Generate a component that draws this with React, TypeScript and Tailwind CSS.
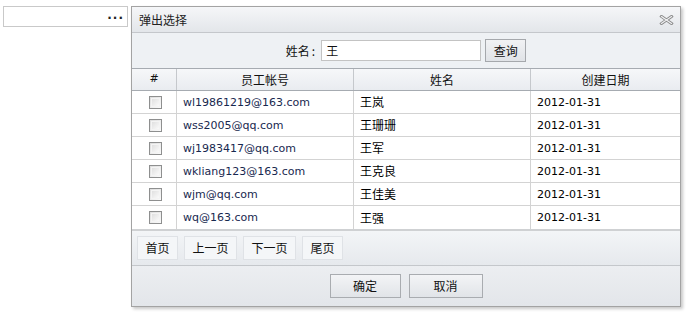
import React from 'react';

const rows = [
  { account: 'wl19861219@163.com', name: '王岚', date: '2012-01-31' },
  { account: 'wss2005@qq.com', name: '王珊珊', date: '2012-01-31' },
  { account: 'wj1983417@qq.com', name: '王军', date: '2012-01-31' },
  { account: 'wkliang123@163.com', name: '王克良', date: '2012-01-31' },
  { account: 'wjm@qq.com', name: '王佳美', date: '2012-01-31' },
  { account: 'wq@163.com', name: '王强', date: '2012-01-31' },
];

const cjk = "font-['Noto_Sans_CJK_SC',sans-serif] text-[12px]";
const latin = "font-['DejaVu_Sans','Noto_Sans_CJK_SC',sans-serif] text-[11px]";

function CloseIcon() {
  return (
    <svg width="15" height="10" viewBox="0 0 15 10">
      <path d="M2.5 1.5 L12.5 8.5 M12.5 1.5 L2.5 8.5" stroke="#8a8a8a" strokeWidth="3" strokeLinecap="square" />
      <path d="M2.5 1.5 L12.5 8.5 M12.5 1.5 L2.5 8.5" stroke="#f0f1f3" strokeWidth="1.2" strokeLinecap="square" />
    </svg>
  );
}

function Checkbox() {
  return (
    <span className="block w-[13px] h-[13px] border border-[#8e8f8f] bg-gradient-to-br from-[#dcdcdc] to-[#fbfbfb] p-[1px]">
      <span className="block w-full h-full border border-[#f4f4f4] bg-gradient-to-br from-[#e0e0e0] to-[#fafafa]" />
    </span>
  );
}

function PagerButton({ label, width }: { label: string; width: string }) {
  return (
    <button className={`${width} h-[24px] border border-[#dfe2e6] bg-[#f4f6f8] text-[#111] leading-none ${cjk}`}>
      {label}
    </button>
  );
}

export default function App() {
  return (
    <div className="w-[690px] h-[314px] bg-white flex items-start overflow-hidden">
      {/* trigger input */}
      <div className="ml-[3px] mt-[6px] w-[125px] h-[21px] border border-[#c9c9c9] bg-white flex items-center justify-end pr-[3px]">
        <span className="text-[#222] font-bold text-[12px] leading-none tracking-[1px] font-['DejaVu_Sans',sans-serif] -mt-[4px]">...</span>
      </div>

      {/* dialog */}
      <div className="ml-[3px] mt-[6px] w-[550px] h-[301px] border border-[#a3a3a3] bg-[#e9ecf0] flex flex-col shadow-[2px_2px_3px_rgba(0,0,0,0.22)]">
        <div className="h-[26px] shrink-0 flex items-center justify-between pl-[7px] pr-[6px] bg-gradient-to-b from-[#f5f6f8] to-[#e3e6ea] border-b border-[#c4c7cb]">
          <span className={`text-[#222] ${cjk}`}>弹出选择</span>
          <CloseIcon />
        </div>

        <div className="h-[35px] shrink-0 flex items-center justify-center bg-[#eef1f4]">
          <span className={`text-[#111] mr-[6px] ${cjk}`}>
            姓名<span className="ml-[2px]">:</span>
          </span>
          <div className={`w-[160px] h-[21px] border border-[#c3c3c3] bg-white flex items-center pl-[4px] text-[#111] ${cjk}`}>王</div>
          <button className={`ml-[4px] w-[41px] h-[23px] border border-[#a5a8ac] bg-gradient-to-b from-[#f1f2f4] to-[#e0e3e7] text-[#111] leading-none ${cjk}`}>
            查询
          </button>
        </div>

        <div className="shrink-0 bg-white border-b-2 border-[#cfd1d3]">
          <div className="grid grid-cols-[45px_177px_177px_1fr] h-[23px] border-t border-b border-[#a6abb1] bg-gradient-to-b from-[#f6f7f9] to-[#e9ecf0] text-[#111]">
            <div className={`flex items-center justify-center border-r border-[#c5c8cc] ${latin}`}>#</div>
            <div className={`flex items-center justify-center border-r border-[#c5c8cc] ${cjk}`}>员工帐号</div>
            <div className={`flex items-center justify-center border-r border-[#c5c8cc] ${cjk}`}>姓名</div>
            <div className={`flex items-center justify-center ${cjk}`}>创建日期</div>
          </div>
          {rows.map((r, i) => (
            <div
              key={r.account}
              className={`grid grid-cols-[45px_177px_177px_1fr] h-[23px] ${i < rows.length - 1 ? 'border-b border-[#d3d3d3]' : ''}`}
            >
              <div className="flex items-center justify-center border-r border-[#d3d3d3] pl-[2px]">
                <Checkbox />
              </div>
              <div className={`flex items-center pl-[6px] pt-[2px] border-r border-[#d3d3d3] text-[#18284f] ${latin}`}>{r.account}</div>
              <div className={`flex items-center pl-[6px] border-r border-[#d3d3d3] text-black ${cjk}`}>{r.name}</div>
              <div className={`flex items-center pl-[6px] pt-[2px] text-black ${latin}`}>{r.date}</div>
            </div>
          ))}
        </div>

        <div className="h-[35px] shrink-0 flex items-center gap-[6px] pl-[5px] bg-gradient-to-b from-[#f3f5f7] to-[#e6e9ed] border-b border-[#c4c7cb]">
          <PagerButton label="首页" width="w-[41px]" />
          <PagerButton label="上一页" width="w-[53px]" />
          <PagerButton label="下一页" width="w-[53px]" />
          <PagerButton label="尾页" width="w-[41px]" />
        </div>

        <div className="flex-1 flex items-center justify-center gap-[8px] bg-gradient-to-b from-[#eceef1] to-[#e3e6ea]">
          <button className={`w-[71px] h-[24px] border border-[#a9acb0] bg-gradient-to-b from-[#f3f4f6] to-[#e1e4e8] text-[#111] leading-none ${cjk}`}>
            确定
          </button>
          <button className={`w-[74px] h-[24px] border border-[#a9acb0] bg-gradient-to-b from-[#f3f4f6] to-[#e1e4e8] text-[#111] leading-none ${cjk}`}>
            取消
          </button>
        </div>
      </div>
    </div>
  );
}
